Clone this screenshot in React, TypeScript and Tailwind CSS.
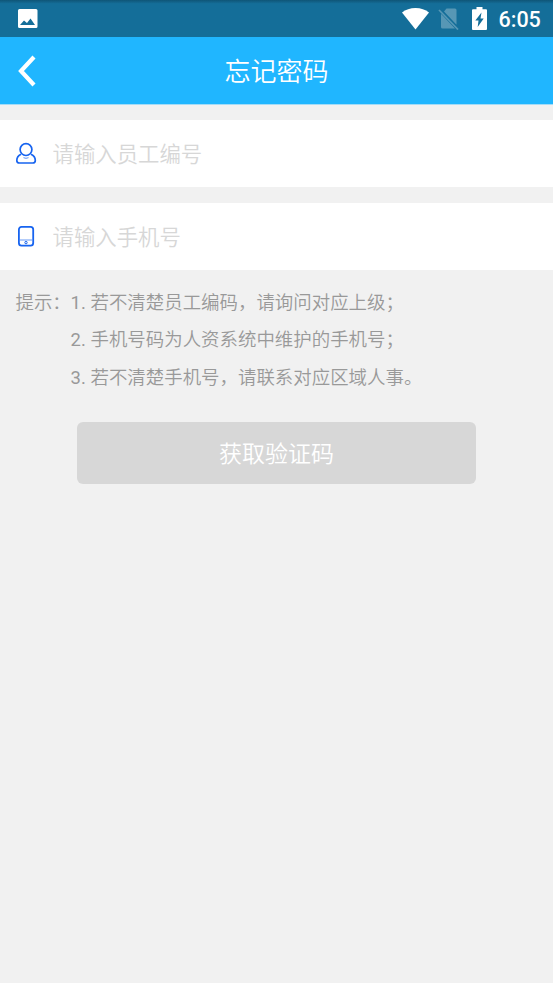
import type { ReactNode } from "react";

function StatusBar() {
  return (
    <div className="flex h-[37px] items-center bg-[#146e99] bg-linear-to-b from-[#0f5577] from-0% to-[#146e99] to-10% pl-[18px] pr-[12px] text-white">
      <svg width="20" height="19" viewBox="0 0 20 19" fill="currentColor">
        <path
          fillRule="evenodd"
          d="M1.500 0H18Q19.500 0 19.500 1.500V17.500Q19.500 19 18 19H1.500Q0 19 0 17.500V1.500Q0 0 1.500 0ZM2 16H17L12.500 9.500L9 14L6 11.500Z"
        />
      </svg>
      <div className="ml-auto flex items-center">
        <svg width="27" height="22" viewBox="0 0 27 22" fill="currentColor">
          <path d="M13.500 21.500L0 4.500Q5.500 0 13.500 0T27 4.500Z" />
        </svg>
        <svg className="ml-[9px]" width="22" height="22" viewBox="0 0 22 22">
          <path
            d="M8.500 .5H17Q18.500 .5 18.500 2V16.800L6 3.500ZM3 5.800L17 20.500H4.500Q3 20.500 3 19Z"
            fill="#5797b5"
          />
          <path d="M1 2L20 21.500" stroke="#5797b5" strokeWidth="1.700" />
        </svg>
        <svg className="ml-[12px]" width="15" height="23" viewBox="0 0 15 23" fill="currentColor">
          <path
            fillRule="evenodd"
            d="M4.500 0H10.500V2.300H14Q15 2.300 15 3.300V22Q15 23 14 23H1Q0 23 0 22V3.300Q0 2.300 1 2.300H4.500ZM9.500 5.500L3.300 13.500H6.500L5.700 20L11.700 11.500H8.500Z"
          />
        </svg>
        <span className="ml-[11.500px] w-[42.500px] whitespace-nowrap pt-[2px] font-['Roboto',sans-serif] text-[21.500px] leading-6 font-medium">
          6:05
        </span>
      </div>
    </div>
  );
}

function Header() {
  return (
    <header className="grid h-[67.500px] grid-cols-[60px_1fr_60px] items-center border-b border-[#a4dcf7] bg-[#20b6ff] text-white">
      <svg className="mt-[2px] ml-[18px]" width="19" height="32" viewBox="0 0 19 32" fill="none">
        <path d="M16 2L3 16L16 30" stroke="currentColor" strokeWidth="4.200" />
      </svg>
      <h1 className="pt-1 text-center text-[26px] font-[350]">忘记密码</h1>
    </header>
  );
}

function Field({ icon, placeholder }: { icon: ReactNode; placeholder: string }) {
  return (
    <label className="flex h-[67px] items-center bg-white pl-[15px]">
      {icon}
      <input
        className="ml-[14.500px] h-full flex-1 pt-[2px] text-[21.400px] font-[350] outline-none placeholder:text-[#d7d7d7] placeholder:opacity-100"
        placeholder={placeholder}
      />
    </label>
  );
}

function UserIcon() {
  return (
    <svg width="23" height="23" viewBox="0 0 23 23" fill="none" stroke="#1764f0" strokeWidth="1.700">
      <circle cx="11" cy="7.600" r="5.900" />
      <path d="M6 12.300C3.500 13.500 1.800 16 1.800 18.500Q1.800 21 4.500 21H17.700Q20.300 21 20.300 18.500C20.300 16 18.600 13.500 16 12.300" />
      <path d="M8.500 15.700Q11 16.900 13.500 15.700" strokeWidth="1" opacity=".7" />
    </svg>
  );
}

function PhoneIcon() {
  return (
    <svg width="23" height="23" viewBox="0 0 23 23" fill="none" stroke="#1764f0">
      <rect x="3.900" y="1.900" width="14.300" height="18.800" rx="2.600" strokeWidth="1.800" />
      <path d="M5 15H17" strokeWidth="1" opacity=".65" />
      <circle cx="11" cy="17.600" r="1.200" strokeWidth="1" />
    </svg>
  );
}

const tips = [
  "若不清楚员工编码，请询问对应上级；",
  "手机号码为人资系统中维护的手机号；",
  "若不清楚手机号，请联系对应区域人事。",
];

export default function App() {
  return (
    <div className="min-h-screen bg-[#f1f1f1] font-['Roboto','Noto_Sans_CJK_SC',sans-serif]">
      <StatusBar />
      <Header />
      <main className="pt-[15.500px]">
        <div className="flex flex-col gap-4">
          <Field icon={<UserIcon />} placeholder="请输入员工编号" />
          <Field icon={<PhoneIcon />} placeholder="请输入手机号" />
        </div>
        <section className="mt-[14.500px] flex pl-[15.500px] text-[18.450px] leading-[37.500px] font-[350] text-[#999999]">
          <span className="w-[55px] shrink-0 whitespace-nowrap">提示：</span>
          <ol>
            {tips.map((tip, index) => (
              <li key={tip} className="flex whitespace-nowrap">
                <span className="w-[20px] font-normal">{index + 1}.</span>
                <span>{tip}</span>
              </li>
            ))}
          </ol>
        </section>
        <button className="mx-auto mt-[25px] block h-[62px] w-[399px] rounded-md bg-[#d7d7d7] pt-[4px] text-[23px] font-[350] text-white">
          获取验证码
        </button>
      </main>
    </div>
  );
}
